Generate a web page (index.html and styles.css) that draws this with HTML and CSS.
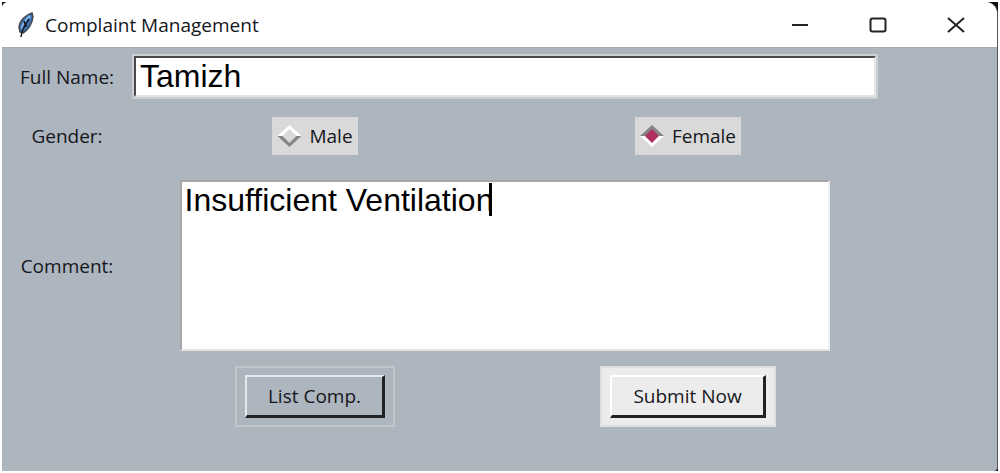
FILE: index.html
```html
<!DOCTYPE html>
<html lang="en">

<head>
    <meta charset="UTF-8">
    <meta name="viewport" content="width=device-width, initial-scale=1.0">
    <title>Complaint Management</title>
    <link rel="stylesheet" href="styles.css">
</head>

<body>
    <div class="desktop">
        <div class="window">
            <header class="titlebar">
                <svg class="feather" width="20" height="26" viewBox="0 0 20 26" aria-hidden="true">
                    <path d="M16 1C10 3 4 8 3 15l1 5 3 1c5-3 9-9 10-16z" fill="#3d6fae" stroke="#45494f" stroke-width="1.5" />
                    <path d="M14 4C10 8 7 12 6 17" fill="none" stroke="#79b0ea" stroke-width="3" />
                    <path d="M13 7C9 12 6 17 5 25M7 16l4-3M9 12l-1-3" fill="none" stroke="#15181d" stroke-width="1.5" />
                </svg>
                <h1>Complaint Management</h1>
                <div class="controls">
                    <button type="button" aria-label="Minimize">
                        <svg width="18" height="18" viewBox="0 0 18 18"><path d="M1 9h16" /></svg>
                    </button>
                    <button type="button" aria-label="Maximize">
                        <svg width="18" height="18" viewBox="0 0 18 18"><rect x="1.5" y="2.5" width="15" height="13" rx="2" /></svg>
                    </button>
                    <button type="button" aria-label="Close">
                        <svg width="18" height="18" viewBox="0 0 18 18"><path d="M1 2l16 14M17 2L1 16" /></svg>
                    </button>
                </div>
            </header>
            <form class="form" onsubmit="return false">
                <label class="caption" for="fullName">Full Name:</label>
                <input class="entry wide" type="text" id="fullName" value="Tamizh">

                <span class="caption gender">Gender:</span>
                <label class="choice gender"><input type="radio" name="gender" value="male">Male</label>
                <label class="choice gender"><input type="radio" name="gender" value="female" checked>Female</label>

                <label class="caption remark" for="comment">Comment:</label>
                <div class="comment remark wide">
                    <textarea id="comment" spellcheck="false">Insufficient Ventilation</textarea>
                    <span class="caret"></span>
                </div>

                <div class="ring list"><button type="button">List Comp.</button></div>
                <div class="ring submit"><button type="submit">Submit Now</button></div>
            </form>
        </div>
    </div>
</body>

</html>
```

FILE: styles.css
```css
* {
    box-sizing: border-box;
}

body {
    margin: 0;
    padding: 2px;
    background: #fff;
    color: #15171c;
    font-family: "Open Sans", "Noto Sans", sans-serif;
    font-size: 19px;
    line-height: 24px;
}

.desktop {
    display: flex;
    min-height: calc(100vh - 4px);
    background: #111;
}

.window {
    display: flex;
    flex-direction: column;
    flex: 1;
    overflow: hidden;
    background: #adb5bf;
    border-right: 1px solid #4f565c;
    border-radius: 6px 12px 4px 0;
}

.titlebar {
    display: flex;
    align-items: center;
    height: 46px;
    padding-left: 14px;
    background: #fff;
    border-bottom: 1px solid #a2acb5;
}

.feather {
    margin-right: 9px;
}

h1 {
    margin: 0;
    font-size: 19px;
    font-weight: 400;
}

.controls {
    display: flex;
    margin-left: auto;
    padding-right: 2px;
}

.controls button {
    display: flex;
    align-items: center;
    justify-content: center;
    width: 78px;
    height: 45px;
    padding: 0;
    background: none;
    border: 0;
}

.controls svg {
    fill: none;
    stroke: #222;
    stroke-width: 2;
}

.form {
    display: grid;
    grid-template-columns: 130px 366fr 380fr 119fr;
    align-items: center;
    justify-items: center;
    padding-top: 6px;
}

.wide {
    grid-column: 2 / 4;
}

.caption {
    grid-column: 1;
}

.entry {
    width: 100%;
    height: 45px;
    padding: 0 4px;
    background: #fff;
    border: 4px solid;
    border-color: #4a4a4a #e4e4e2 #e4e4e2 #4a4a4a;
    outline: 2px solid #ccd0d2;
    outline-offset: -2px;
    border-radius: 0;
    color: #000;
    font: 32px "Liberation Sans", Arial, sans-serif;
}

.gender {
    margin-top: 18px;
}

.choice {
    display: flex;
    align-items: center;
    gap: 8px;
    height: 38px;
    padding: 0 5px;
    background: #d9d9d9;
}

/* diamond shaped indicator */
.choice input {
    appearance: none;
    width: 24px;
    height: 22px;
    margin: 0;
    background: linear-gradient(#fff 50%, #858585 50%);
    clip-path: polygon(50% 0, 100% 50%, 50% 100%, 0 50%);
}

.choice input::before {
    content: "";
    display: block;
    width: 14px;
    height: 14px;
    margin: 4px 5px;
    background: #d9d9d9;
    clip-path: polygon(50% 0, 100% 50%, 50% 100%, 0 50%);
}

.choice input:checked {
    background: linear-gradient(#858585 50%, #fff 50%);
}

.choice input:checked::before {
    background: #b03060;
}

.remark {
    margin-top: 25px;
}

.comment {
    position: relative;
    width: 87%;
}

.comment textarea {
    display: block;
    width: 100%;
    height: 171px;
    padding: 1px 2px;
    background: #fff;
    border: 2px solid;
    border-color: #a6a6a6 #f0f0f0 #e4e4e4 #a6a6a6;
    border-radius: 0;
    outline: 0;
    resize: none;
    color: #000;
    font: 32px/34px "Liberation Sans", Arial, sans-serif;
}

.caret {
    position: absolute;
    top: 3px;
    left: 309px;
    width: 3px;
    height: 33px;
    background: #000;
}

.ring {
    margin-top: 15px;
    padding: 7px 8px;
    border: 2px solid #c3c7cb;
}

.ring button {
    display: block;
    height: 43px;
    padding: 0 21px;
    background: #adb5bf;
    border: 2px solid;
    border-width: 2px 3px 3px 2px;
    border-color: #e3eaee #222 #222 #e3eaee;
    color: inherit;
    font: inherit;
}

.list {
    grid-column: 2;
}

.submit {
    grid-column: 3;
    background: #ececec;
    border-color: #dedfe0;
}

.submit button {
    background: #ececec;
    border-color: #fff #222 #222 #fff;
}
```
